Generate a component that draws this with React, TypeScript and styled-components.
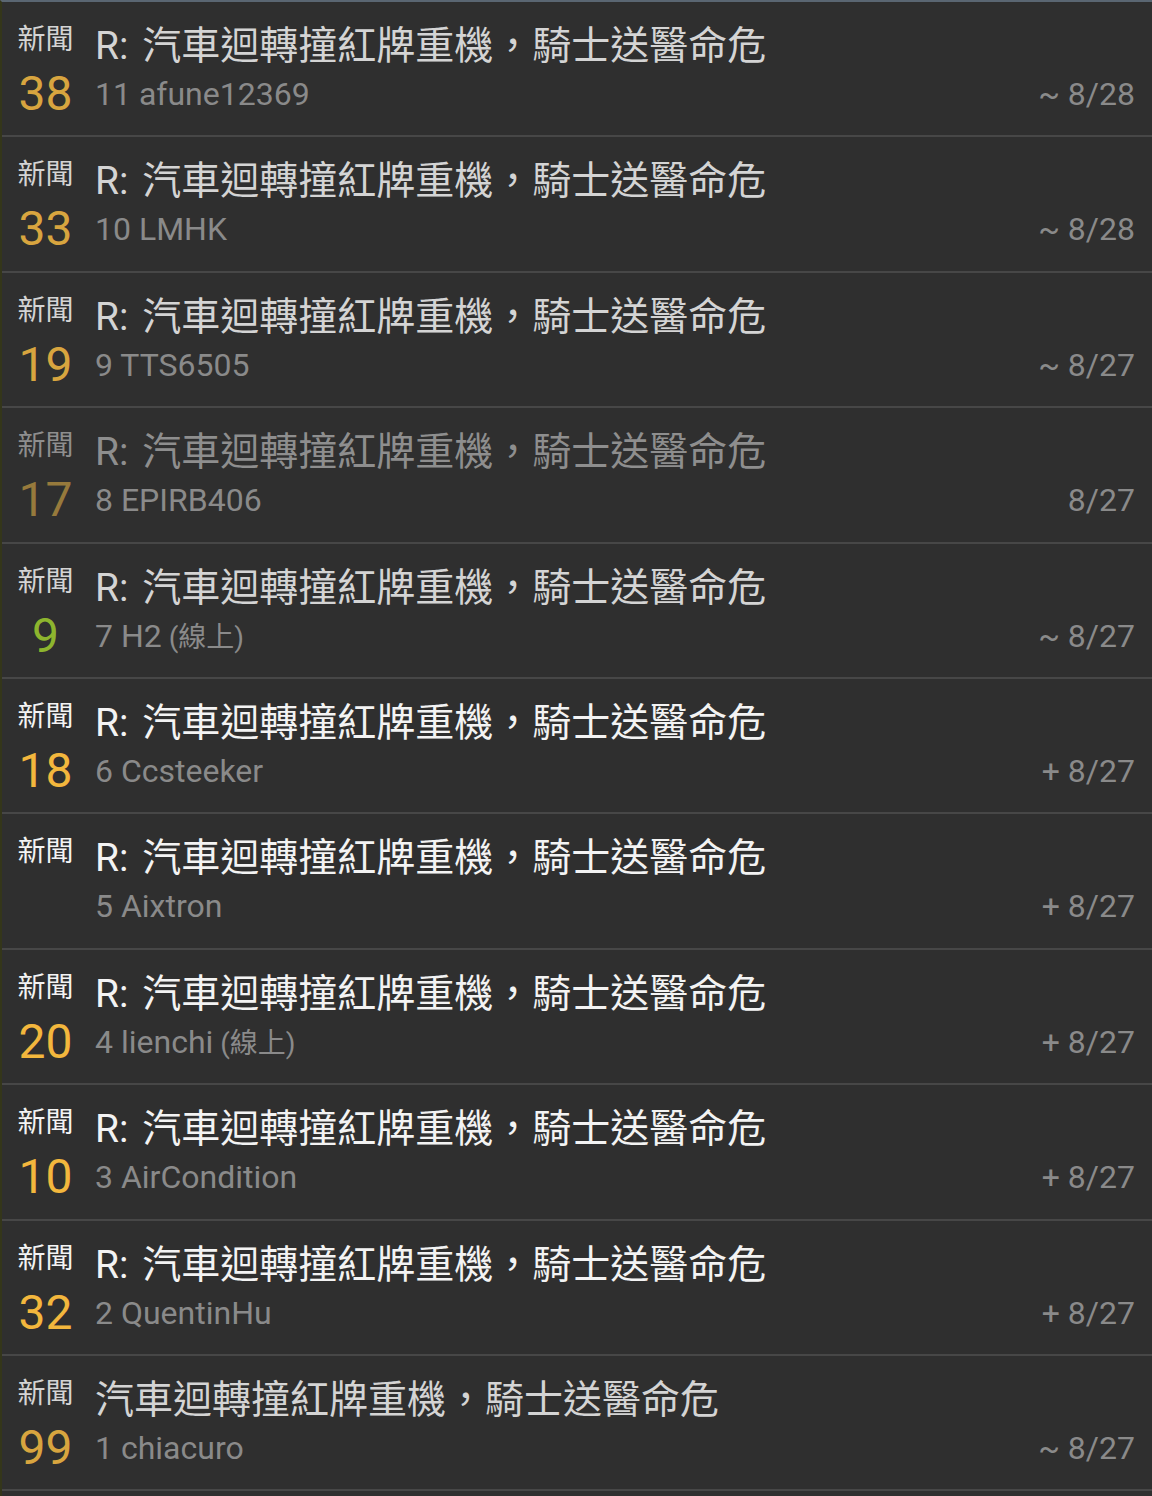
import React from "react";
import styled, { createGlobalStyle } from "styled-components";

const GlobalStyle = createGlobalStyle`
  html, body {
    margin: 0;
    padding: 0;
    background: #2f2f2f;
  }
  body {
    font-family: Roboto, "Noto Sans CJK TC", sans-serif;
  }
`;

type State = "read" | "unread" | "dim";

interface Post {
  title: string;
  num?: number;
  idx: number;
  author: string;
  online?: boolean;
  mark: string;
  date: string;
  state: State;
}

const TITLE = "汽車迴轉撞紅牌重機，騎士送醫命危";

const posts: Post[] = [
  { title: "R: " + TITLE, num: 38, idx: 11, author: "afune12369", mark: "~", date: "8/28", state: "read" },
  { title: "R: " + TITLE, num: 33, idx: 10, author: "LMHK", mark: "~", date: "8/28", state: "read" },
  { title: "R: " + TITLE, num: 19, idx: 9, author: "TTS6505", mark: "~", date: "8/27", state: "read" },
  { title: "R: " + TITLE, num: 17, idx: 8, author: "EPIRB406", mark: "", date: "8/27", state: "dim" },
  { title: "R: " + TITLE, num: 9, idx: 7, author: "H2", online: true, mark: "~", date: "8/27", state: "read" },
  { title: "R: " + TITLE, num: 18, idx: 6, author: "Ccsteeker", mark: "+", date: "8/27", state: "unread" },
  { title: "R: " + TITLE, idx: 5, author: "Aixtron", mark: "+", date: "8/27", state: "unread" },
  { title: "R: " + TITLE, num: 20, idx: 4, author: "lienchi", online: true, mark: "+", date: "8/27", state: "unread" },
  { title: "R: " + TITLE, num: 10, idx: 3, author: "AirCondition", mark: "+", date: "8/27", state: "unread" },
  { title: "R: " + TITLE, num: 32, idx: 2, author: "QuentinHu", mark: "+", date: "8/27", state: "unread" },
  { title: TITLE, num: 99, idx: 1, author: "chiacuro", mark: "~", date: "8/27", state: "read" },
];

const titleColor: Record<State, string> = {
  read: "#d4d4d4",
  unread: "#f3f3f3",
  dim: "#8e8e8e",
};

const numColor = (n: number, state: State): string => {
  if (n < 10) return "#8db52e";
  if (state === "dim") return "#977a3c";
  if (state === "unread") return "#f3b73d";
  return "#d8a53f";
};

const List = styled.div`
  border-top: 2px solid #5a6672;
  border-left: 2px solid #34361a;
  background: #2f2f2f;
  min-height: 1494px;
`;

const Row = styled.div`
  box-sizing: border-box;
  height: 135.4px;
  border-bottom: 2px solid #474747;
  display: grid;
  grid-template-columns: 59px 1fr auto;
  grid-template-rows: 50px 50px;
  column-gap: 20px;
  padding: 15px 17px 0 14px;
`;

const Tag = styled.div<{ $state: State }>`
  grid-column: 1;
  grid-row: 1;
  font-family: "Noto Sans CJK TC", sans-serif;
  font-size: 28px;
  line-height: 40px;
  color: ${(p) => titleColor[p.$state]};
  text-align: center;
  white-space: nowrap;
`;

const Title = styled.div<{ $state: State }>`
  grid-column: 2 / 4;
  grid-row: 1;
  font-family: Roboto, "Noto Sans CJK TC", sans-serif;
  font-size: 39px;
  line-height: 58px;
  word-spacing: 4px;
  color: ${(p) => titleColor[p.$state]};
  white-space: nowrap;
`;

const Num = styled.div<{ $color: string }>`
  grid-column: 1;
  grid-row: 2;
  font-family: Roboto, sans-serif;
  font-size: 48px;
  line-height: 54px;
  color: ${(p) => p.$color};
  text-align: center;
`;

const Meta = styled.div`
  grid-column: 2;
  grid-row: 2;
  font-family: Roboto, "Noto Sans CJK TC", sans-serif;
  font-size: 32px;
  line-height: 54px;
  color: #8a8a8a;
  white-space: nowrap;
`;

const Online = styled.span`
  font-size: 28px;
`;

const DateText = styled.div`
  grid-column: 3;
  grid-row: 2;
  font-family: Roboto, sans-serif;
  font-size: 32px;
  line-height: 54px;
  color: #8a8a8a;
  text-align: right;
  white-space: nowrap;
`;

export default function App() {
  return (
    <>
      <GlobalStyle />
      <List>
        {posts.map((p, i) => (
          <Row key={i}>
            <Tag $state={p.state}>新聞</Tag>
            <Title $state={p.state}>{p.title}</Title>
            <Num $color={p.num !== undefined ? numColor(p.num, p.state) : "transparent"}>
              {p.num !== undefined ? p.num : ""}
            </Num>
            <Meta>
              {p.idx} {p.author}
              {p.online && <Online> (線上)</Online>}
            </Meta>
            <DateText>
              {p.mark ? `${p.mark} ${p.date}` : p.date}
            </DateText>
          </Row>
        ))}
      </List>
    </>
  );
}
